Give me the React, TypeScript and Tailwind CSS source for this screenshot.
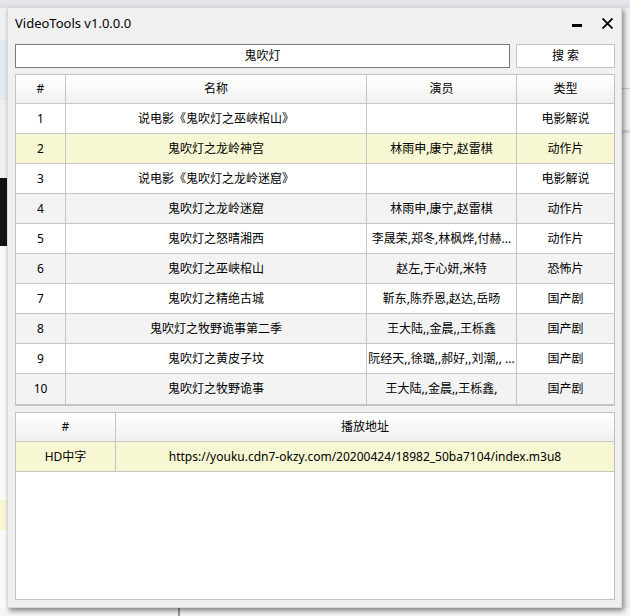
const rows = [
  { id: 1, name: "说电影《鬼吹灯之巫峡棺山》", actors: "", type: "电影解说" },
  { id: 2, name: "鬼吹灯之龙岭神宫", actors: "林雨申,康宁,赵雷棋", type: "动作片" },
  { id: 3, name: "说电影《鬼吹灯之龙岭迷窟》", actors: "", type: "电影解说" },
  { id: 4, name: "鬼吹灯之龙岭迷窟", actors: "林雨申,康宁,赵雷棋", type: "动作片" },
  { id: 5, name: "鬼吹灯之怒晴湘西", actors: "李晟荣,郑冬,林枫烨,付赫...", type: "动作片" },
  { id: 6, name: "鬼吹灯之巫峡棺山", actors: "赵左,于心妍,米特", type: "恐怖片" },
  { id: 7, name: "鬼吹灯之精绝古城", actors: "靳东,陈乔恩,赵达,岳旸", type: "国产剧" },
  { id: 8, name: "鬼吹灯之牧野诡事第二季", actors: "王大陆,,金晨,,王栎鑫", type: "国产剧" },
  { id: 9, name: "鬼吹灯之黄皮子坟", actors: "阮经天,,徐璐,,郝好,,刘潮,, ...", type: "国产剧" },
  { id: 10, name: "鬼吹灯之牧野诡事", actors: "王大陆,,金晨,,王栎鑫,", type: "国产剧" },
];

const selected = 2;

export default function App() {
  return (
    <div className="relative w-[630px] h-[616px] overflow-hidden bg-[#eef0f2] font-['Noto_Sans','Noto_Sans_CJK_SC',sans-serif] text-[12px] text-black">
      {/* app behind the window */}
      <div className="absolute left-0 top-0 w-full h-[8px] bg-gradient-to-b from-[#e6e8eb] to-[#d9dde2]" />
      <div className="absolute left-0 top-[40px] w-[8px] h-[60px] bg-[#e3ebf1]" />
      <div className="absolute left-0 top-[178px] w-[8px] h-[68px] bg-[#121212]" />
      <div className="absolute left-0 top-[246px] w-[8px] h-[370px] bg-[#fafafa]" />
      <div className="absolute left-0 top-[500px] w-[8px] h-[30px] bg-[#f7f7d2]" />
      <div className="absolute left-0 top-[608px] w-full h-[8px] bg-[#f7f7f7]" />
      <div className="absolute left-[178px] top-[606px] w-[2px] h-[10px] bg-[#9a9a9a]" />
      <div className="absolute right-0 top-[88px] w-[8px] h-[1px] bg-[#c9c9c9]" />
      <div className="absolute right-0 top-[130px] w-[8px] h-[3px] bg-[#d3d6da]" />

      {/* window */}
      <div className="absolute left-[7px] top-[7px] w-[615px] h-[601px] bg-[#f0f0f0] border border-[#d8d8d8] shadow-[2px_3px_5px_rgba(0,0,0,0.45)] flex flex-col pl-[7px] pr-[6px]">
        <div className="h-[36px] flex items-start">
          <span className="pt-[7px] text-[13px] leading-[17px] font-['Noto_Sans',sans-serif]">VideoTools v1.0.0.0</span>
          <div className="ml-auto mt-[16px] w-[10px] h-[3px] bg-black" />
          <svg className="ml-[20px] mt-[10px] mr-[2px]" width="11" height="11" viewBox="0 0 11 11">
            <path d="M0.5 0.5 L10.5 10.5 M10.5 0.5 L0.5 10.5" stroke="black" strokeWidth="1.8" />
          </svg>
        </div>

        <div className="h-[24px] flex gap-[6px]">
          <div className="w-[495px] bg-white border border-[#7a7a7a] flex items-center justify-center">鬼吹灯</div>
          <button className="w-[99px] bg-white border border-[#c4c4c4] flex items-center justify-center">搜 索</button>
        </div>

        <div className="mt-[6px] border-x border-t border-b-2 border-[#c2c2c2] bg-white">
          <div className="grid grid-cols-[50px_301px_150px_97px] h-[29px] border-b border-[#c6c6c6] bg-gradient-to-b from-white to-[#f1f1f1]">
            <div className="flex items-center justify-center border-r border-[#c6c6c6]">#</div>
            <div className="flex items-center justify-center border-r border-[#c6c6c6]">名称</div>
            <div className="flex items-center justify-center border-r border-[#c6c6c6]">演员</div>
            <div className="flex items-center justify-center">类型</div>
          </div>
          {rows.map((r, i) => (
            <div
              key={r.id}
              className={`grid grid-cols-[50px_301px_150px_97px] h-[30px] ${i < rows.length - 1 ? "border-b border-[#c6c6c6]" : ""} ${
                r.id === selected ? "bg-[#f7f7d3]" : r.id % 2 === 0 ? "bg-[#f3f3f3]" : "bg-white"
              }`}
            >
              <div className="flex items-center justify-center border-r border-[#c6c6c6]">{r.id}</div>
              <div className="flex items-center justify-center border-r border-[#c6c6c6]">{r.name}</div>
              <div className="flex items-center justify-center border-r border-[#c6c6c6] whitespace-nowrap overflow-hidden">{r.actors}</div>
              <div className="flex items-center justify-center">{r.type}</div>
            </div>
          ))}
        </div>

        <div className="mt-[6px] mb-[7px] flex-1 border border-[#c2c2c2] bg-white">
          <div className="grid grid-cols-[100px_498px] h-[29px] border-b border-[#c6c6c6] bg-gradient-to-b from-white to-[#f1f1f1]">
            <div className="flex items-center justify-center border-r border-[#c6c6c6]">#</div>
            <div className="flex items-center justify-center">播放地址</div>
          </div>
          <div className="grid grid-cols-[100px_498px] h-[30px] border-b border-[#c6c6c6] bg-[#f7f7d3]">
            <div className="flex items-center justify-center border-r border-[#c6c6c6]">HD中字</div>
            <div className="flex items-center justify-center">https://youku.cdn7-okzy.com/20200424/18982_50ba7104/index.m3u8</div>
          </div>
        </div>
      </div>
    </div>
  );
}
